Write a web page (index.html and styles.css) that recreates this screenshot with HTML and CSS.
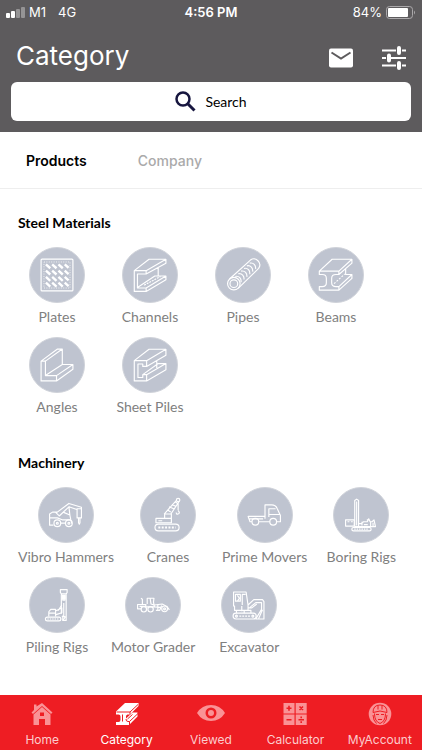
FILE: index.html
```html
<!DOCTYPE html>
<html lang="en">
<head>
    <meta charset="UTF-8">
    <meta name="viewport" content="width=device-width, initial-scale=1.0">
    <title>Category</title>
    <link rel="stylesheet" href="styles.css">
</head>
<body>
    <header class="header">
        <div class="status-bar">
            <div class="status-left">
                <svg width="19" height="11" viewBox="0 0 19 11" fill="#fff">
                    <rect x="0" y="6" width="4" height="5" rx="1"/>
                    <rect x="5" y="4" width="4" height="7" rx="1"/>
                    <rect x="10" y="2" width="4" height="9" rx="1" opacity=".35"/>
                    <rect x="15" y="0" width="4" height="11" rx="1" opacity=".35"/>
                </svg>
                <span class="carrier">M1</span>
                <span>4G</span>
            </div>
            <div class="status-time">4:56 PM</div>
            <div class="status-right">
                <span>84%</span>
                <svg width="30" height="13" viewBox="0 0 30 13">
                    <rect x=".5" y=".5" width="26" height="12" rx="3" fill="none" stroke="#aaa8aa"/>
                    <rect x="2" y="2" width="20" height="9" rx="1" fill="#fff"/>
                    <path d="M28 4.500q2 2 0 4z" fill="#aaa8aa"/>
                </svg>
            </div>
        </div>
        <div class="title-bar">
            <h1>Category</h1>
            <button class="icon-button" aria-label="Messages">
                <svg width="24" height="20" viewBox="0 0 24 20">
                    <rect width="24" height="19" y=".5" rx="2" fill="#fff"/>
                    <path d="M2.500 4.500L12 10.500l9.500-6" fill="none" stroke="#5d5b5d" stroke-width="2"/>
                </svg>
            </button>
            <button class="icon-button" aria-label="Filters">
                <svg width="24" height="24" viewBox="0 0 24 24" fill="none" stroke="#fff">
                    <path d="M0 4.500h14M20 4.500h4M0 12h4M9 12h15M0 19.500h14M20 19.500h4" stroke-width="2"/>
                    <path d="M17 2v5M7 9.500v5M17 17v5" stroke-width="4" stroke-linecap="round"/>
                </svg>
            </button>
        </div>
        <form class="search" role="search">
            <svg width="21" height="21" viewBox="0 0 21 21" fill="none" stroke="#17163f">
                <circle cx="8" cy="8" r="6.500" stroke-width="2.500"/>
                <path d="M12.500 12.500l7 7" stroke-width="3"/>
            </svg>
            <input type="text" size="6" placeholder="Search" aria-label="Search">
        </form>
    </header>

    <nav class="tabs">
        <a href="#products" class="tab active">Products</a>
        <a href="#company" class="tab">Company</a>
    </nav>

    <main class="content">
        <section class="group">
            <h2>Steel Materials</h2>
            <div class="items">
                <a href="#plates" class="item">
                    <svg class="item-icon" viewBox="0 0 56 56">
                        <rect x="11.500" y="11.500" width="33" height="33" rx="1"/>
                        <rect x="14.500" y="14.500" width="27" height="27" stroke-dasharray="1 1.500" stroke-width=".8"/>
                        <path class="tread" d="M16.500 17l4.500 4M23 17l4.500 4M29.500 17l4.500 4M36 17l4 3.500M16.500 23.500l4.500 4M23 23.500l4.500 4M29.500 23.500l4.500 4M36 23.500l4 3.500M16.500 30l4.500 4M23 30l4.500 4M29.500 30l4.500 4M36 30l4 3.500M16.500 36l4.500 4M23 36l4.500 4M29.500 36l4.500 4M36 36l4 3.500"/>
                    </svg>
                    <span>Plates</span>
                </a>
                <a href="#channels" class="item">
                    <svg class="item-icon" viewBox="0 0 56 56">
                        <path d="M11.700 23.500H24V27h-9v14.500h9V45H11.700zM11.700 23.500L27 11.700h17.500L24 23.500M44.500 11.700v4L24 27M36.500 20v9M15 41l18-12h11.500L24 41.500M44.500 29v4L24 45"/>
                        <path d="M22 38.500l17-9" stroke-dasharray="2 1"/>
                    </svg>
                    <span>Channels</span>
                </a>
                <a href="#pipes" class="item">
                    <svg class="item-icon" viewBox="0 0 56 56">
                        <circle cx="18.500" cy="37" r="6.500"/>
                        <circle cx="18.500" cy="37" r="4"/>
                        <path d="M14 32.200L35.700 12.500c5.500-4 12.500 3 8.500 8.700L23 41.800"/>
                        <path d="M20 29.500c4-1 6.500 2.500 6 6M23 26.700c4-1 6.500 2.500 6 6M26 24c4-1 6.500 2.500 6 6M29 21.200c4-1 6.500 2.500 6 6M32 18.500c4-1 6.500 2.500 6 6M35 15.700c4-1 6.500 2.500 6 6"/>
                    </svg>
                    <span>Pipes</span>
                </a>
                <a href="#beams" class="item">
                    <svg class="item-icon" viewBox="0 0 56 56">
                        <path d="M10.700 24H31v3.500h-3q-4.500 0-4.500 4v4.500q0 4 4.500 4h3v3.700H10.700V40h3q4.300 0 4.300-4v-4.500q0-4-4.300-4h-3zM10.700 24L24 11.700h20.500L31 24M44.500 11.700v4L31 27.500M38 21.500v6h6.500L31 40M44.500 27.500v4L31 43.700"/>
                        <path d="M26 37l11-10" stroke-dasharray="2 1.500"/>
                    </svg>
                    <span>Beams</span>
                </a>
                <a href="#angles" class="item">
                    <svg class="item-icon" viewBox="0 0 56 56">
                        <path d="M11.500 24H16v15h11.500v5.500h-16zM11.500 24l17-12.500h5L16 24M33.500 11.500v16M16 39l17.500-11.500h11L27.500 39M44.500 27.500v5l-17 12"/>
                    </svg>
                    <span>Angles</span>
                </a>
                <a href="#sheet-piles" class="item">
                    <svg class="item-icon" viewBox="0 0 56 56">
                        <path d="M11.700 23.500h12.800v6h-4V27h-5v14h5v-3h4v6.500H11.700zM11.700 23.500L27 11.700h17.500l-20 11.800M44.500 11.700V18l-20 11.500M35 24v7M20.500 38l16-11.500h8L24.500 38M44.500 26.500V33l-20 11.500"/>
                    </svg>
                    <span>Sheet Piles</span>
                </a>
            </div>
        </section>

        <section class="group">
            <h2>Machinery</h2>
            <div class="items">
                <a href="#vibro-hammers" class="item">
                    <svg class="item-icon" viewBox="0 0 56 56">
                        <circle cx="19" cy="36.500" r="3.500"/>
                        <circle cx="31" cy="36.500" r="3.500"/>
                        <circle cx="19" cy="36.500" r="1"/>
                        <circle cx="31" cy="36.500" r="1"/>
                        <path d="M15 38.500h-4V27l3-2h5l12-9 13 4v3M11 31h8l5 2h9l1 4M17 25l4 4 10-9.500 9 3M25 25l7 3 1 5M31 19l1 9M22.500 36.500h5M39.500 21.500h4.500V31h-4.500zM41 31v5l.8 1.500.7-1.500v-5"/>
                    </svg>
                    <span>Vibro Hammers</span>
                </a>
                <a href="#cranes" class="item">
                    <svg class="item-icon" viewBox="0 0 56 56">
                        <rect x="14.500" y="37.500" width="25" height="7" rx="3.500"/>
                        <path d="M18 41h18" stroke-dasharray="2 1.500" stroke-width="2"/>
                        <path d="M15.500 36v-4.500h9V27h7v9zM24.500 31.500h7M18 34h4M24 27l13-14.500M31 27l8.500-13M28 23l3 2M29 19.500l5 2M32 17l4 2M35 14l3 2M38.500 15v8M38.500 23.500q2.500 2.500 0 3.500-2 .5-2-1.500"/>
                        <circle cx="38.500" cy="12.500" r="1.800"/>
                    </svg>
                    <span>Cranes</span>
                </a>
                <a href="#prime-movers" class="item">
                    <svg class="item-icon" viewBox="0 0 56 56">
                        <circle cx="18" cy="35" r="3.500"/>
                        <circle cx="36.500" cy="35" r="3.500"/>
                        <path d="M14.500 35h-2l-2-5.500H28v-12h7q4 0 5.500 3.500l3.500 7.500V35h-4M21.500 35H33M28 29.500V32M32 30v-8.500h7M32 21.500v6h11.500M12 32h14"/>
                    </svg>
                    <span>Prime Movers</span>
                </a>
                <a href="#boring-rigs" class="item">
                    <svg class="item-icon" viewBox="0 0 56 56">
                        <path d="M21.500 40V13l2-1.500 2 1.500v27zM23.500 14v25"/>
                        <rect x="12" y="33" width="9" height="6.500"/>
                        <path d="M14 35h2M17.500 35h2M25.500 37h3l2-2h4l1.500-3 1.500 3h2l2-2 1.500 7h-18M31 38h4M38 35v5M40.500 36v4M34 33h2M29 35v4"/>
                        <rect x="18.500" y="41" width="20" height="3.500" rx="1.700"/>
                        <path d="M21 42.700h15" stroke-dasharray="1.500 1"/>
                    </svg>
                    <span>Boring Rigs</span>
                </a>
                <a href="#piling-rigs" class="item">
                    <svg class="item-icon" viewBox="0 0 56 56">
                        <path d="M31.500 12h7v3l-1 1.500h-5l-1-1.500zM32.500 17v20M37.500 17v27h-3.500v-5M33.500 20h3M33.500 23h3M35 26v14"/>
                        <path d="M33.500 18h3v4h-3z" fill="#fff"/>
                        <path d="M19.500 40v-5l2-2.500h5V40M20 36.500h6M27 38l6-2v-5l-6 3M29 34l4-6M33 40h4M34 44l3-4"/>
                        <rect x="16" y="40.500" width="16" height="4" rx="2"/>
                        <path d="M18 42.500h12" stroke-dasharray="1.500 1"/>
                    </svg>
                    <span>Piling Rigs</span>
                </a>
                <a href="#motor-grader" class="item">
                    <svg class="item-icon" viewBox="0 0 56 56">
                        <circle cx="18.500" cy="32.500" r="2.800"/>
                        <circle cx="25.500" cy="32.500" r="2.800"/>
                        <circle cx="40" cy="32" r="3"/>
                        <circle cx="40" cy="32" r="1"/>
                        <path d="M15.500 32H12v-4.500h9M14 29.500h7M17 27.500V22l-1.500-1M20.500 27v3h9l-1-5 .5-4h-7v6M25 21l1 6 3 1M29.500 28l8-1 4 2M29.500 30l7 .5M31 33.500h4l2-5M33 27v6M42 29l3 4"/>
                    </svg>
                    <span>Motor Grader</span>
                </a>
                <a href="#excavator" class="item">
                    <svg class="item-icon" viewBox="0 0 56 56">
                        <rect x="11.500" y="36.500" width="24" height="6" rx="3"/>
                        <circle cx="15" cy="39.500" r="1"/>
                        <circle cx="32" cy="39.500" r="1"/>
                        <path d="M18 39.500h11" stroke-dasharray="2 1"/>
                        <path d="M12 29V14.500h13l2 13.500v5.500H13V29zM14 17h5v7h-5zM21 28V17h3.500M16 18l2 3-2 3M20.500 29v5.500M27 31h4l5-4M27 28l6-5.500h9l1.500 2v18H35l6-10v-7h-6l-6 5M38 42l4-9M23 33.500v3M15 33.500v3M27 33.500h3v3"/>
                    </svg>
                    <span>Excavator</span>
                </a>
            </div>
        </section>
    </main>

    <nav class="bottom-nav">
        <a href="#home" class="nav-item">
            <svg width="24" height="24" viewBox="0 0 24 24" fill="currentColor">
                <path d="M4 6V2.500h2.500v2L12 1l10.500 9.500-1.500 1.500-9-8-9 8-1.500-1.500L4 8z"/>
                <path fill-rule="evenodd" d="M3.500 12.500L12 5l8.500 7.500V23H15v-6H9v6H3.500zM10 10.500V14h4v-3.500z"/>
            </svg>
            <span>Home</span>
        </a>
        <a href="#category" class="nav-item active">
            <svg width="24" height="24" viewBox="0 0 24 24">
                <path d="M1 9.500L10 1h13.500v3L15 12.500h-2.500q-1.500.5-1.500 2v2l6.500-6h5v4L14 23H1v-3h2.500q2 0 2-2v-3.500q0-2-2-2H1z" fill="currentColor"/>
                <path d="M1.500 10H15l8-7.500M15 10v2.500M11 17q0 2.500 2 2.500h1.500l8.500-8M14.500 19.500V23M12.500 17l5-4.500M7.500 12.500v7" fill="none" stroke="#ee1d23"/>
            </svg>
            <span>Category</span>
        </a>
        <a href="#viewed" class="nav-item">
            <svg width="28" height="24" viewBox="0 0 28 24" fill="currentColor">
                <path fill-rule="evenodd" d="M0 11Q5 3 14 3t14 8q-5 8-14 8T0 11zM14 5.500a5.500 5.500 0 1 0 0 11 5.500 5.500 0 0 0 0-11z"/>
                <circle cx="14" cy="11" r="3"/>
            </svg>
            <span>Viewed</span>
        </a>
        <a href="#calculator" class="nav-item">
            <svg width="24" height="24" viewBox="0 0 24 24">
                <path d="M.5 1h11v10.500H.5zM12.700 1h11v10.500h-11zM.5 12.500h11V23H.5zM12.700 12.500h11V23h-11z" fill="currentColor"/>
                <path d="M3.500 6.200h5M6 3.700v5M16.500 4.500l3.500 3.500M20 4.500L16.500 8M3.500 17.700h5M15.500 17.700h5.500M18.200 14.500v1.700M18.200 19.200v1.700" stroke="#ee1d23" stroke-width="1.600"/>
            </svg>
            <span>Calculator</span>
        </a>
        <a href="#my-account" class="nav-item">
            <svg width="24" height="24" viewBox="0 0 24 24">
                <circle cx="12" cy="12" r="11.300" fill="currentColor"/>
                <path d="M5 10.500q0-7.500 7-7.500t7 7.500q-7-3-14 0zM6.500 11.500q0 8 5.500 10 5.500-2 5.500-10M10 3.500v4M14 3.500v4M5 13l1 5 2.500 3.500M19 13l-1 5-2.500 3.500M8 12.500h3M13 12.500h3M10 17.500h4" fill="none" stroke="#ee1d23"/>
            </svg>
            <span>MyAccount</span>
        </a>
    </nav>
</body>
</html>
```

FILE: styles.css
```css
* {
    box-sizing: border-box;
}
body {
    margin: 0;
    min-height: 100vh;
    display: flex;
    flex-direction: column;
    font-family: Inter, "Liberation Sans", sans-serif;
    background-color: #fff;
    color: #000;
}
a {
    color: inherit;
    text-decoration: none;
}
svg {
    display: block;
    flex-shrink: 0;
}
.header {
    background-color: #5d5b5d;
    color: #fff;
    padding-bottom: 11px;
}
.status-bar {
    display: grid;
    grid-template-columns: 1fr auto 1fr;
    align-items: center;
    height: 24px;
    padding: 0 6px;
    font-size: 13px;
}
.status-left,
.status-right {
    display: flex;
    align-items: center;
    gap: 4px;
}
.status-right {
    justify-content: flex-end;
}
.carrier {
    margin-right: 8px;
}
.status-time {
    font-weight: 600;
}
.title-bar {
    display: flex;
    align-items: center;
    gap: 29px;
    height: 58px;
    padding: 10px 16px 0;
}
.title-bar h1 {
    flex: 1;
    margin: 0 0 6px;
    font-size: 26px;
    font-weight: 400;
}
.icon-button {
    padding: 0;
    margin-bottom: 1px;
    border: none;
    background: none;
    cursor: pointer;
}
.search {
    display: flex;
    align-items: center;
    justify-content: center;
    gap: 9px;
    height: 39px;
    margin: 0 11px;
    background-color: #fff;
    border-radius: 6px;
}
.search input {
    field-sizing: content;
    padding: 0;
    border: none;
    outline: none;
    background: none;
    color: #000;
    font-family: Lato, sans-serif;
    font-size: 14px;
}
.search input::placeholder {
    color: #000;
}
.tabs {
    display: flex;
    align-items: center;
    gap: 51px;
    height: 57px;
    padding: 0 26px;
    border-bottom: 1px solid #eee;
    font-size: 14px;
    font-weight: 500;
}
.tab {
    color: #aaa;
}
.tab.active {
    color: #000;
    font-weight: 600;
}
.content {
    flex: 1;
    padding: 24px 18px 16px;
    font-family: Lato, sans-serif;
}
.group + .group {
    margin-top: 37px;
}
.group h2 {
    margin: 0 0 14px;
    font-size: 14px;
    line-height: 20px;
    font-weight: 700;
}
.items {
    display: flex;
    flex-wrap: wrap;
    gap: 11px 15px;
}
.item {
    display: flex;
    flex-direction: column;
    align-items: center;
    gap: 5px;
    min-width: 78px;
    color: #808080;
    font-size: 14px;
    line-height: 18px;
}
.item-icon {
    width: 56px;
    height: 56px;
    border: 1px solid #d0d3da;
    border-radius: 50%;
    background-color: #bfc4d0;
    fill: none;
    stroke: #fff;
    stroke-width: 1.2;
    stroke-linejoin: round;
}
.tread {
    stroke-width: 2.5;
}
.bottom-nav {
    display: grid;
    grid-template-columns: repeat(5, 1fr);
    height: 55px;
    padding-top: 7px;
    background-color: #ee1d23;
    color: #fa9295;
    font-size: 12px;
    line-height: 16px;
}
.nav-item {
    display: flex;
    flex-direction: column;
    align-items: center;
    gap: 6px;
}
.nav-item span {
    color: #fccccd;
}
.nav-item.active,
.nav-item.active span {
    color: #fff;
}
```
